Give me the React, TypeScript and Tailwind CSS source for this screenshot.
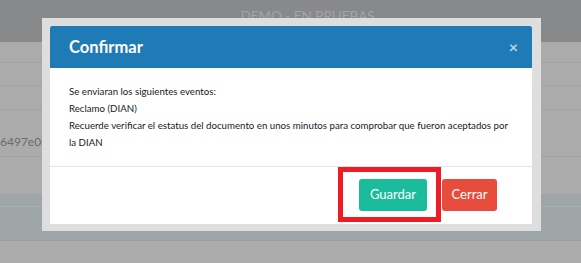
export default function App() {
  return (
    <div className="relative w-[581px] h-[263px] overflow-hidden bg-[#ababab] font-['Lato',sans-serif]">
      {/* page behind the overlay */}
      <div className="h-[42px] bg-[#88898b] flex justify-center pl-[34px] pt-[10px]">
        <span className="text-[13.5px] text-[#a3a4a6] leading-none">DEMO - EN PRUEBAS</span>
      </div>
      <div className="h-[21px] border-b border-[#a2a2a2]" />
      <div className="h-[23px] border-b border-[#a2a2a2]" />
      <div className="h-[24px] border-b border-[#a2a2a2]" />
      <div className="h-[47px] border-b border-[#a2a2a2] flex items-end pb-[5px] text-[12px] text-[#6b6b6b]">
        6497e08
      </div>
      <div className="h-[37px]" />
      <div className="h-[47px] bg-[#9ea6a8] border-b border-[#98a0a2]">
        <div className="h-[13px] border-b border-[#a8b0b2]" />
      </div>

      {/* modal */}
      <div className="absolute left-[42px] top-[18px] w-[499px] h-[213px] bg-[#dedede] pl-[8px] pt-[8px] pr-[9px] pb-[7px]">
        <div className="bg-white h-full flex flex-col">
          <div className="h-[42px] bg-[#1f7bb6] rounded-t-[2px] flex items-center justify-between pl-[19px] pr-[14px]">
            <span className="text-white font-bold text-[16.5px]">Confirmar</span>
            <span className="text-[#b9d5ea] font-bold text-[16px] leading-none">×</span>
          </div>
          <div className="px-[19px] py-[15px] text-[9.7px] leading-[17px] text-[#1a1a1a] border-b border-[#e5e5e5]">
            <div>Se enviaran los siguientes eventos:</div>
            <div>Reclamo (DIAN)</div>
            <div className="pr-[4px]">Recuerde verificar el estatus del documento en unos minutos para comprobar que fueron aceptados por la DIAN</div>
          </div>
          <div className="flex-1 flex justify-end items-start gap-[15px] pt-[12px] pr-[35px]">
            <button className="w-[68px] h-[32px] rounded-[3px] bg-[#1abc9c] text-white text-[13px]">Guardar</button>
            <button className="w-[55px] h-[32px] rounded-[3px] bg-[#e74c3c] text-white text-[13px]">Cerrar</button>
          </div>
        </div>
      </div>

      {/* highlight */}
      <div className="absolute left-[338px] top-[167px] w-[103px] h-[55px] border-[5px] border-[#ee1c25]" />
    </div>
  );
}
